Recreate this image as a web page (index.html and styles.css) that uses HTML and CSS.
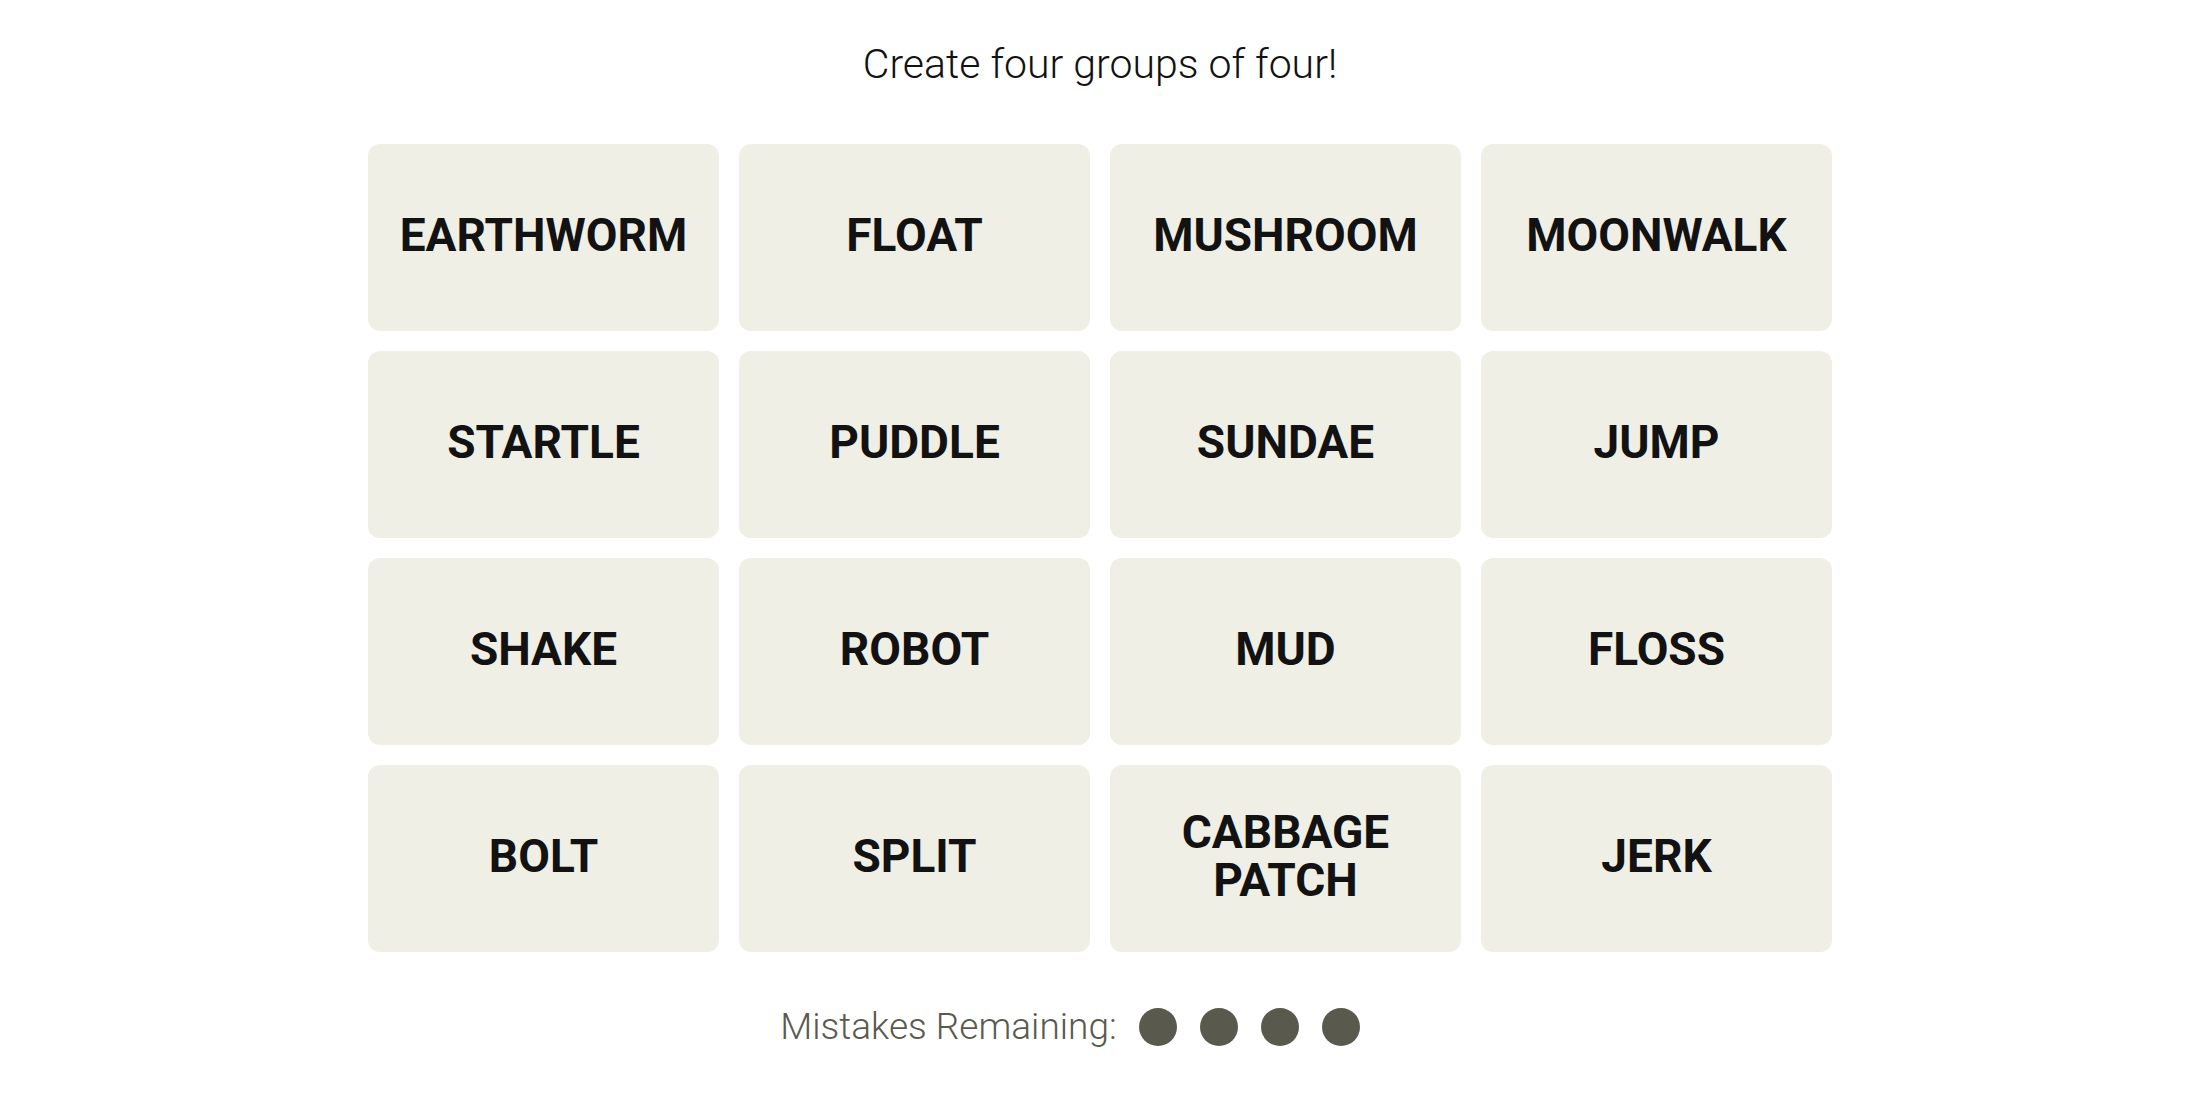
FILE: index.html
```html
<!DOCTYPE html>
<html>
<head>
<title>Connections</title>

<link rel="stylesheet" href="styles.css">

</head>
<body>

<div class="game">
  <p class="prompt">Create four groups of four!</p>

  <div class="board">
    <div class="tile">EARTHWORM</div>
    <div class="tile">FLOAT</div>
    <div class="tile">MUSHROOM</div>
    <div class="tile">MOONWALK</div>

    <div class="tile">STARTLE</div>
    <div class="tile">PUDDLE</div>
    <div class="tile">SUNDAE</div>
    <div class="tile">JUMP</div>

    <div class="tile">SHAKE</div>
    <div class="tile">ROBOT</div>
    <div class="tile">MUD</div>
    <div class="tile">FLOSS</div>

    <div class="tile">BOLT</div>
    <div class="tile">SPLIT</div>
    <div class="tile">CABBAGE<br>PATCH</div>
    <div class="tile">JERK</div>
  </div>

  <div class="mistakes">
    <span class="mistakes-label">Mistakes Remaining:</span>
    <span class="dots">
      <span class="dot"></span>
      <span class="dot"></span>
      <span class="dot"></span>
      <span class="dot"></span>
    </span>
  </div>
</div>

</body>
</html>
```

FILE: styles.css
```css
body {
  margin: 0;
  font-family: Roboto, "Liberation Sans", sans-serif;
  background-color: white;
  color: #121212;
}

.game {
  display: flex;
  flex-direction: column;
  align-items: center;
}

.prompt {
  margin: 34px 0 0 0;
  font-size: 41px;
  font-weight: 300;
  line-height: 60px;
}

.board {
  margin-top: 50px;
  display: grid;
  grid-template-columns: repeat(4, 351px);
  grid-auto-rows: 187px;
  gap: 20px;
}

.tile {
  display: flex;
  align-items: center;
  justify-content: center;
  text-align: center;
  background-color: #efefe6;
  border-radius: 12px;
  font-size: 46px;
  font-weight: 700;
  line-height: 48px;
  padding-bottom: 6px;
  box-sizing: border-box;
}

.mistakes {
  margin-top: 53px;
  display: flex;
  align-items: center;
  padding-right: 60px;
  color: #5a594e;
  font-size: 37px;
  font-weight: 300;
}

.dots {
  display: flex;
  gap: 23px;
  margin-left: 22px;
}

.dot {
  width: 38px;
  height: 38px;
  border-radius: 50%;
  background-color: #5a594e;
}
```
